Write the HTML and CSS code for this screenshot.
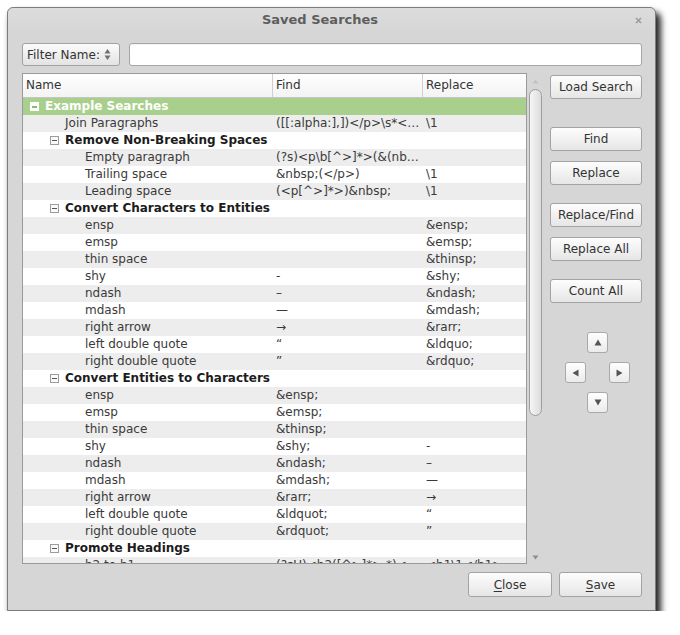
FILE: index.html
```html
<!DOCTYPE html>
<html>
<head>
<meta charset="utf-8">
<title>Saved Searches</title>
<link rel="stylesheet" href="styles.css">
</head>
<body>
<div class="window">
  <div class="titlebar">
    <div class="title">Saved Searches</div>
    <div class="wclose"><svg width="7" height="7" viewBox="0 0 7 7"><path d="M1 1L6 6M6 1L1 6" stroke="#9c9c9c" stroke-width="1.6"/></svg></div>
  </div>
  <div class="filter-row">
    <div class="combo"><span>Filter Name:</span><svg class="spin" width="7" height="13" viewBox="0 0 7 13"><path d="M3.5 1L6.5 5.5H0.5Z" fill="#707070"/><path d="M0.5 7.5H6.5L3.5 12Z" fill="#707070"/></svg></div>
    <div class="entry"></div>
  </div>
  <div class="main">
    <div class="tree">
      <div class="thead">
        <div class="th">Name</div>
        <div class="th sep">Find</div>
        <div class="th sep">Replace</div>
      </div>
      <div class="rows">
        <div class="row sel"><div class="c name g0"><span class="exp"></span>Example Searches</div><div class="c"></div><div class="c"></div></div>
        <div class="row"><div class="c name l1">Join Paragraphs</div><div class="c f">([[:alpha:],])&lt;/p&gt;\s*&lt;…</div><div class="c r">\1</div></div>
        <div class="row grp"><div class="c name g1"><span class="exp"></span>Remove Non-Breaking Spaces</div><div class="c"></div><div class="c"></div></div>
        <div class="row"><div class="c name l2">Empty paragraph</div><div class="c f">(?s)&lt;p\b[^&gt;]*&gt;(&amp;(nb…</div><div class="c r"></div></div>
        <div class="row"><div class="c name l2">Trailing space</div><div class="c f">&amp;nbsp;(&lt;/p&gt;)</div><div class="c r">\1</div></div>
        <div class="row"><div class="c name l2">Leading space</div><div class="c f">(&lt;p[^&gt;]*&gt;)&amp;nbsp;</div><div class="c r">\1</div></div>
        <div class="row grp"><div class="c name g1"><span class="exp"></span>Convert Characters to Entities</div><div class="c"></div><div class="c"></div></div>
        <div class="row"><div class="c name l2">ensp</div><div class="c f"></div><div class="c r">&amp;ensp;</div></div>
        <div class="row"><div class="c name l2">emsp</div><div class="c f"></div><div class="c r">&amp;emsp;</div></div>
        <div class="row"><div class="c name l2">thin space</div><div class="c f"></div><div class="c r">&amp;thinsp;</div></div>
        <div class="row"><div class="c name l2">shy</div><div class="c f">-</div><div class="c r">&amp;shy;</div></div>
        <div class="row"><div class="c name l2">ndash</div><div class="c f">–</div><div class="c r">&amp;ndash;</div></div>
        <div class="row"><div class="c name l2">mdash</div><div class="c f">—</div><div class="c r">&amp;mdash;</div></div>
        <div class="row"><div class="c name l2">right arrow</div><div class="c f">→</div><div class="c r">&amp;rarr;</div></div>
        <div class="row"><div class="c name l2">left double quote</div><div class="c f">“</div><div class="c r">&amp;ldquo;</div></div>
        <div class="row"><div class="c name l2">right double quote</div><div class="c f">”</div><div class="c r">&amp;rdquo;</div></div>
        <div class="row grp"><div class="c name g1"><span class="exp"></span>Convert Entities to Characters</div><div class="c"></div><div class="c"></div></div>
        <div class="row"><div class="c name l2">ensp</div><div class="c f">&amp;ensp;</div><div class="c r"></div></div>
        <div class="row"><div class="c name l2">emsp</div><div class="c f">&amp;emsp;</div><div class="c r"></div></div>
        <div class="row"><div class="c name l2">thin space</div><div class="c f">&amp;thinsp;</div><div class="c r"></div></div>
        <div class="row"><div class="c name l2">shy</div><div class="c f">&amp;shy;</div><div class="c r">-</div></div>
        <div class="row"><div class="c name l2">ndash</div><div class="c f">&amp;ndash;</div><div class="c r">–</div></div>
        <div class="row"><div class="c name l2">mdash</div><div class="c f">&amp;mdash;</div><div class="c r">—</div></div>
        <div class="row"><div class="c name l2">right arrow</div><div class="c f">&amp;rarr;</div><div class="c r">→</div></div>
        <div class="row"><div class="c name l2">left double quote</div><div class="c f">&amp;ldquot;</div><div class="c r">“</div></div>
        <div class="row"><div class="c name l2">right double quote</div><div class="c f">&amp;rdquot;</div><div class="c r">”</div></div>
        <div class="row grp"><div class="c name g1"><span class="exp"></span>Promote Headings</div><div class="c"></div><div class="c"></div></div>
        <div class="row"><div class="c name l2">h2 to h1</div><div class="c f">(?sU)&lt;h2([^&gt;]*&gt;.*)&lt;…</div><div class="c r">&lt;h1\1&lt;/h1&gt;</div></div>
      </div>
    </div>
    <div class="scroll">
      <div class="sb-up"><svg width="7" height="5" viewBox="0 0 7 5"><path d="M3.5 0.5L6.5 4.5H0.5Z" fill="#c2c2c2"/></svg></div>
      <div class="thumb"></div>
      <div class="sb-space"></div>
      <div class="sb-down"><svg width="7" height="5" viewBox="0 0 7 5"><path d="M0.5 0.5H6.5L3.5 4.5Z" fill="#8e8e8e"/></svg></div>
    </div>
    <div class="side">
      <div class="btn load">Load Search</div>
      <div class="btn find">Find</div>
      <div class="btn gap10">Replace</div>
      <div class="btn gap18">Replace/Find</div>
      <div class="btn gap10">Replace All</div>
      <div class="btn gap18">Count All</div>
      <div class="pad">
        <div class="abtn up"><svg width="8" height="7" viewBox="0 0 8 7"><path d="M4 0.5L7.5 6.5H0.5Z" fill="#555"/></svg></div>
        <div class="abtn left"><svg width="7" height="8" viewBox="0 0 7 8"><path d="M0.5 4L6.5 0.5V7.5Z" fill="#555"/></svg></div>
        <div class="abtn right"><svg width="7" height="8" viewBox="0 0 7 8"><path d="M6.5 4L0.5 0.5V7.5Z" fill="#555"/></svg></div>
        <div class="abtn down"><svg width="8" height="7" viewBox="0 0 8 7"><path d="M0.5 0.5H7.5L4 6.5Z" fill="#555"/></svg></div>
      </div>
    </div>
  </div>
  <div class="bottom">
    <div class="btn close"><u>C</u>lose</div>
    <div class="btn save"><u>S</u>ave</div>
  </div>
</div>
</body>
</html>
```
FILE: styles.css
```css
html, body {
  margin: 0;
  padding: 0;
  background: #ffffff;
}
body {
  font-family: "DejaVu Sans", "Liberation Sans", sans-serif;
  font-size: 12px;
  color: #333333;
}
.window {
  margin: 7px 0 0 7px;
  width: 649px;
  height: 604px;
  box-sizing: border-box;
  border: 1px solid #7c7c7c;
  border-radius: 6px 6px 0 0;
  background: #d6d6d6;
  box-shadow: 4px 6px 6px 1px rgba(0, 0, 0, 0.85);
  padding: 0 13px 13px 14px;
  display: flex;
  flex-direction: column;
}
.titlebar {
  display: flex;
  height: 24px;
  margin: 0 -13px 11px -14px;
  border-radius: 6px 6px 0 0;
  background: linear-gradient(#dcdcdc, #d6d6d6);
}
.title {
  flex: 1;
  text-align: center;
  line-height: 24px;
  font-size: 13px;
  font-weight: bold;
  color: #5e5e5e;
}
.wclose {
  width: 23px;
  box-sizing: border-box;
  padding-left: 3px;
  display: flex;
  align-items: center;
}
.filter-row {
  display: flex;
  gap: 9px;
  height: 23px;
}
.combo {
  width: 98px;
  box-sizing: border-box;
  border: 1px solid #a2a2a2;
  border-radius: 3px;
  background: linear-gradient(#fbfbfb, #e3e3e3);
  display: flex;
  align-items: center;
  justify-content: space-between;
  padding: 0 8px 0 4px;
  color: #333;
}
.entry {
  flex: 1;
  box-sizing: border-box;
  border: 1px solid #a6a6a6;
  border-radius: 3px;
  background: #ffffff;
  box-shadow: inset 0 1px 1px rgba(0, 0, 0, 0.06);
}
.main {
  display: flex;
  margin-top: 7px;
  height: 491px;
}
.tree {
  width: 505px;
  box-sizing: border-box;
  border: 1px solid #9a9a9a;
  background: #ffffff;
  overflow: hidden;
}
.thead {
  display: grid;
  grid-template-columns: 249px 150px 1fr;
  height: 24px;
  box-sizing: border-box;
  border-bottom: 1px solid #c6c6c6;
  background: linear-gradient(#ffffff, #f3f3f3);
}
.th {
  line-height: 23px;
  padding-left: 3px;
  color: #333;
}
.th.sep {
  border-left: 1px solid #cfcfcf;
}
.row {
  display: grid;
  grid-template-columns: 249px 150px 1fr;
  height: 17px;
  line-height: 17px;
  white-space: nowrap;
  color: #3a3a3a;
  background: #ffffff;
}
.row:nth-child(even) {
  background: #ededed;
}
.c {
  overflow: hidden;
}
.c.f, .c.r {
  padding-left: 4px;
}
.name {
  display: flex;
  align-items: center;
}
.l1 { padding-left: 42px; }
.l2 { padding-left: 62px; }
.g0 { padding-left: 7px; }
.g1 { padding-left: 27px; }
.exp {
  position: relative;
  width: 9px;
  height: 9px;
  box-sizing: border-box;
  border: 1px solid #9c9c9c;
  background: #fafafa;
  margin-right: 6px;
  flex: none;
}
.exp::after {
  content: "";
  position: absolute;
  left: 1px;
  top: 3px;
  width: 5px;
  height: 1px;
  background: #555;
}
.grp {
  font-weight: bold;
  color: #1c1c1c;
}
.row.sel {
  background: #a9cf8d;
  color: #ffffff;
  font-weight: bold;
}
.row.sel .exp {
  border-color: #ffffff;
  background: #ffffff;
}
.row.sel .exp::after {
  background: #8db972;
  height: 2px;
  top: 3px;
}
.scroll {
  width: 16px;
  display: flex;
  flex-direction: column;
  align-items: center;
}
.sb-up {
  height: 16px;
  display: flex;
  align-items: center;
  justify-content: center;
}
.thumb {
  width: 13px;
  height: 327px;
  box-sizing: border-box;
  border: 1px solid #9e9e9e;
  border-radius: 7px;
  background: linear-gradient(to right, #f6f6f6, #dcdcdc);
  margin-left: 1px;
}
.sb-space {
  flex: 1;
}
.sb-down {
  height: 14px;
  display: flex;
  align-items: center;
  justify-content: center;
}
.side {
  width: 92px;
  margin-left: 7px;
  display: flex;
  flex-direction: column;
}
.btn {
  box-sizing: border-box;
  height: 24px;
  border: 1px solid #a3a3a3;
  border-radius: 3px;
  background: linear-gradient(#fdfdfd, #e6e6e6);
  display: flex;
  align-items: center;
  justify-content: center;
  color: #333333;
  white-space: nowrap;
}
.btn.load { margin-top: 2px; }
.btn.find { margin-top: 28px; }
.btn.gap10 { margin-top: 10px; }
.btn.gap18 { margin-top: 18px; }
.pad {
  margin: 29px 0 0 15px;
  display: grid;
  grid-template-columns: 21px 21px 21px;
  grid-template-rows: 21px 21px 21px;
  column-gap: 1px;
  row-gap: 9px;
}
.abtn {
  box-sizing: border-box;
  border: 1px solid #a9a9a9;
  border-radius: 3px;
  background: linear-gradient(#fefefe, #ebebeb);
  display: flex;
  align-items: center;
  justify-content: center;
}
.abtn.up { grid-column: 2; grid-row: 1; }
.abtn.left { grid-column: 1; grid-row: 2; }
.abtn.right { grid-column: 3; grid-row: 2; }
.abtn.down { grid-column: 2; grid-row: 3; }
.bottom {
  display: flex;
  justify-content: flex-end;
  gap: 7px;
  margin-top: 8px;
}
.bottom .btn {
  height: 25px;
}
.btn.close { width: 84px; }
.btn.save { width: 83px; }
u {
  text-decoration: underline;
  text-underline-offset: 2px;
}
```
